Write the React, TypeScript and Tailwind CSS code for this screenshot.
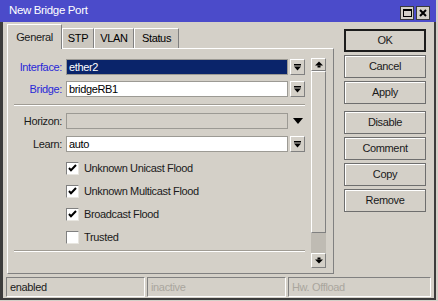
import React from "react";

const font = { fontFamily: '"Liberation Sans", Arial, sans-serif' };

const DropArrow = () => (
  <svg width="7" height="7" viewBox="0 0 7 7">
    <rect x="0" y="0" width="7" height="1.5" fill="#000" />
    <path d="M0 2.5h7L3.5 6.5z" fill="#000" />
  </svg>
);

const ScrollArrow = ({ up }: { up?: boolean }) => (
  <svg width="8" height="7" viewBox="0 0 8 7" className={up ? "" : "rotate-180"}>
    <path d="M0 4.5L4 0.5L8 4.5z" fill="#000" />
    <rect x="2.5" y="4.5" width="3" height="2" fill="#000" />
  </svg>
);

function DropButton() {
  return (
    <div className="w-[15px] h-[16px] flex items-center justify-center border border-t-white border-l-white border-r-[#808080] border-b-[#808080] bg-[#d4d0c8]">
      <DropArrow />
    </div>
  );
}

function FieldRow({
  label,
  value,
  blue,
  selected,
  disabled,
}: {
  label: string;
  value?: string;
  blue?: boolean;
  selected?: boolean;
  disabled?: boolean;
}) {
  return (
    <div className="flex items-center h-[16px]">
      <div className={`w-[50px] text-right pr-[2px] ${blue ? "text-[#2828d8]" : "text-[#1a1a1a]"}`}>{label}</div>
      <div
        className={`ml-[2px] w-[222px] h-[16px] flex items-center px-[2px] border border-[#9c9a94] ${
          selected ? "bg-[#0a246a] text-white" : disabled ? "bg-[#d4d0c8]" : "bg-white text-black"
        }`}
      >
        {value}
      </div>
      <div className="ml-[2px]">
        {disabled ? (
          <div className="w-[15px] h-[16px] flex items-center justify-center">
            <svg width="10" height="6" viewBox="0 0 10 6">
              <path d="M0 0h10L5 6z" fill="#000" />
            </svg>
          </div>
        ) : (
          <DropButton />
        )}
      </div>
    </div>
  );
}

function Check({ label, checked }: { label: string; checked?: boolean }) {
  return (
    <div className="flex items-center h-[14px] pl-[52px]">
      <div className="w-[13px] h-[13px] bg-white border border-t-[#808080] border-l-[#808080] border-r-[#e8e6e0] border-b-[#e8e6e0] flex items-center justify-center">
        {checked && (
          <svg width="9" height="8" viewBox="0 0 9 8">
            <path d="M1 4l2 2.3L8 1" stroke="#000" strokeWidth="2" fill="none" />
          </svg>
        )}
      </div>
      <span className="ml-[5px] text-[#1a1a1a]">{label}</span>
    </div>
  );
}

function Separator({ className = "" }: { className?: string }) {
  return <div className={`w-[291px] h-[2px] border-t border-t-[#a09c94] border-b border-b-white ${className}`} />;
}

function SideButton({ label, def, className = "" }: { label: string; def?: boolean; className?: string }) {
  return (
    <div
      className={`w-[82px] h-[23px] flex items-center justify-center text-[#1a1a1a] ${
        def ? "border-2 border-[#1c1c1c]" : "border border-[#6e6e6e] shadow-[inset_1px_1px_0_#ffffff]"
      } ${className}`}
    >
      {label}
    </div>
  );
}

export default function App() {
  return (
    <div className="w-[438px] h-[301px] bg-[#d4d0c8] overflow-hidden text-[11px] leading-none tracking-[-0.35px]" style={font}>
      <div className="w-[436px] h-[300px] flex flex-col">
        {/* Title bar */}
        <div className="h-[22px] bg-[#4b4bca] flex items-center pl-[9px] pr-[6px]">
          <span className="text-white text-[11.5px]">New Bridge Port</span>
          <div className="ml-auto flex gap-[2px] pt-[3px]">
            <div className="w-[14px] h-[14px] bg-[#d4d0c8] border border-[#3a3a3a] flex items-center justify-center">
              <div className="w-[9px] h-[8px] border border-black border-t-2" />
            </div>
            <div className="w-[14px] h-[14px] bg-[#d4d0c8] border border-[#3a3a3a] flex items-center justify-center">
              <svg width="8" height="8" viewBox="0 0 8 8">
                <path d="M1 1L7 7M7 1L1 7" stroke="#000" strokeWidth="2" />
              </svg>
            </div>
          </div>
        </div>

        {/* Body */}
        <div className="flex-1 flex flex-col border-l-[3px] border-r-[2px] border-b-[2px] border-[#3c3c3c]">
          <div className="flex pt-[2px]">
            {/* Tabs + panel */}
            <div className="ml-[4px] w-[327px] flex flex-col">
              <div className="flex items-end h-[24px]">
                <div className="w-[55px] h-[25px] -mb-px z-10 bg-[#d4d0c8] border-t border-l border-t-white border-l-white border-r border-r-[#808080] flex items-center justify-center text-[#1a1a1a]">
                  General
                </div>
                <div className="w-[32px] h-[20px] bg-[#cbc7bf] border-t border-l border-t-white border-l-white border-r border-r-[#808080] flex items-center justify-center">
                  STP
                </div>
                <div className="w-[40px] h-[20px] bg-[#cbc7bf] border-t border-l border-t-white border-l-white border-r border-r-[#808080] flex items-center justify-center">
                  VLAN
                </div>
                <div className="w-[45px] h-[20px] bg-[#cbc7bf] border-t border-l border-t-white border-l-white border-r border-r-[#808080] flex items-center justify-center">
                  Status
                </div>
              </div>
              <div className="h-[226px] border border-t-white border-l-white border-r-[#808080] border-b-[#808080] flex">
                <div className="w-[303px] pl-[6px] pt-[10px] flex flex-col">
                  <FieldRow label="Interface:" value="ether2" blue selected />
                  <div className="h-[6px]" />
                  <FieldRow label="Bridge:" value="bridgeRB1" blue />
                  <Separator className="mt-[7px] mb-[7px]" />
                  <FieldRow label="Horizon:" disabled />
                  <div className="h-[7px]" />
                  <FieldRow label="Learn:" value="auto" />
                  <div className="h-[9px]" />
                  <Check label="Unknown Unicast Flood" checked />
                  <div className="h-[9px]" />
                  <Check label="Unknown Multicast Flood" checked />
                  <div className="h-[9px]" />
                  <Check label="Broadcast Flood" checked />
                  <div className="h-[9px]" />
                  <Check label="Trusted" />
                  <Separator className="mt-[6px]" />
                </div>
                {/* Scrollbar */}
                <div className="mt-[9px] w-[15px] h-[210px] flex flex-col">
                  <div className="h-[13px] flex items-center justify-center border border-t-white border-l-white border-r-[#808080] border-b-[#808080]">
                    <ScrollArrow up />
                  </div>
                  <div className="h-[162px] border border-t-white border-l-white border-r-[#808080] border-b-[#808080]" />
                  <div className="flex-1 bg-[#bfbbb3]" />
                  <div className="h-[15px] flex items-center justify-center border border-t-white border-l-white border-r-[#808080] border-b-[#808080]">
                    <ScrollArrow />
                  </div>
                </div>
              </div>
            </div>

            {/* Right buttons */}
            <div className="ml-[10px] pt-[5px] flex flex-col gap-[3px]">
              <SideButton label="OK" def />
              <SideButton label="Cancel" />
              <SideButton label="Apply" />
              <SideButton label="Disable" className="mt-[4px]" />
              <SideButton label="Comment" />
              <SideButton label="Copy" />
              <SideButton label="Remove" />
            </div>
          </div>

          {/* Status bar */}
          <div className="mt-auto mb-[1px] ml-[3px] flex gap-[2px] h-[20px]">
            <div className="w-[139px] flex items-center pl-[3px] border border-t-[#808080] border-l-[#808080] border-r-white border-b-white text-[#1a1a1a]">
              enabled
            </div>
            <div className="w-[139px] flex items-center pl-[3px] border border-t-[#808080] border-l-[#808080] border-r-white border-b-white text-[#aaa69e]">
              inactive
            </div>
            <div className="w-[143px] flex items-center pl-[3px] border border-t-[#808080] border-l-[#808080] border-r-white border-b-white text-[#aaa69e]">
              Hw. Offload
            </div>
          </div>
        </div>
      </div>
    </div>
  );
}
